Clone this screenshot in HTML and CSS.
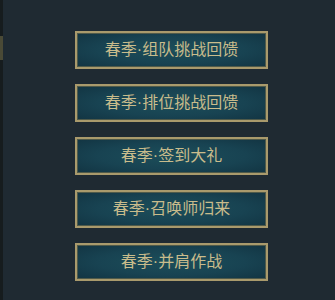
FILE: index.html
```html
<!DOCTYPE html>
<html lang="zh">
<head>
<meta charset="utf-8">
<link rel="stylesheet" href="styles.css">
</head>
<body>
<div class="page">
  <div class="edge"><span class="edge-mark"></span></div>
  <div class="menu">
    <div class="btn">春季·组队挑战回馈</div>
    <div class="btn">春季·排位挑战回馈</div>
    <div class="btn">春季·签到大礼</div>
    <div class="btn">春季·召唤师归来</div>
    <div class="btn">春季·并肩作战</div>
  </div>
</div>
</body>
</html>
```
FILE: styles.css
```css
html, body {
  margin: 0;
  padding: 0;
  background: #1f2a32;
}
.page {
  display: flex;
  width: 335px;
  height: 300px;
  overflow: hidden;
  background: #1f2a32;
}
.edge {
  width: 3px;
  background: #161c1e;
  display: flex;
  flex-direction: column;
  padding-top: 36px;
}
.edge-mark {
  display: block;
  height: 24px;
  width: 3px;
  background: #4a4a36;
}
.menu {
  display: flex;
  flex-direction: column;
  gap: 15px;
  padding-top: 31px;
  margin-left: 72px;
}
.btn {
  box-sizing: border-box;
  width: 193px;
  height: 38px;
  border: 2px solid #a99a6c;
  box-shadow: inset 0 0 0 1px #4f5a4a;
  background: radial-gradient(ellipse at 50% 50%, #1c4e5a 0%, #184352 55%, #123442 100%);
  color: #c9bc8c;
  font-family: "Liberation Sans", "Noto Sans CJK SC", sans-serif;
  font-size: 16px;
  line-height: 34px;
  text-align: center;
}
```
